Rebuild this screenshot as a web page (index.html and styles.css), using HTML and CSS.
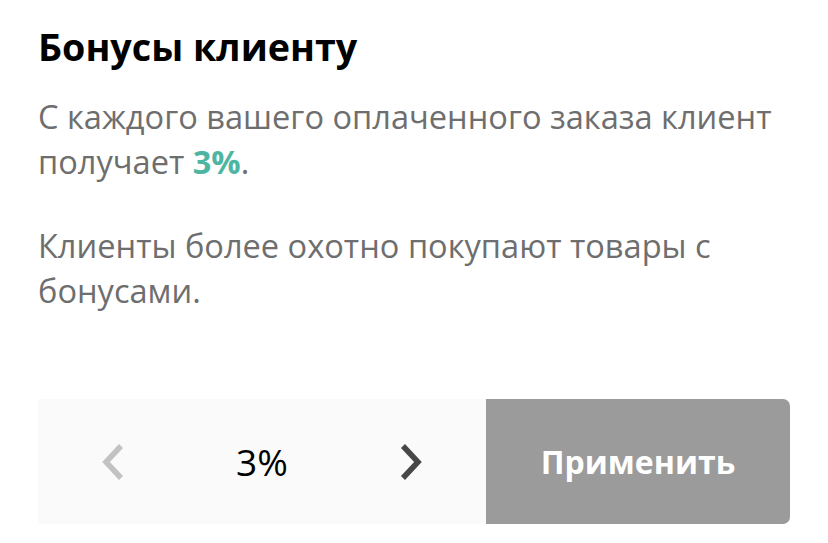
FILE: index.html
```
<!DOCTYPE html>
<html lang="ru">
<head>
<meta charset="utf-8">
<link rel="stylesheet" href="styles.css">
</head>
<body>
<div class="page">
  <h1 class="title">Бонусы клиенту</h1>
  <p class="text">С каждого вашего оплаченного заказа клиент получает <b class="accent">3%</b>.</p>
  <p class="text second">Клиенты более охотно покупают товары с бонусами.</p>
  <div class="bar">
    <div class="stepper">
      <div class="cell">
        <svg class="chev" width="26" height="38" viewBox="0 0 26 38"><polyline points="21,3 6,19 21,35" fill="none" stroke="#c2c2c2" stroke-width="5.5"/></svg>
      </div>
      <div class="cell value">3%</div>
      <div class="cell">
        <svg class="chev" width="26" height="38" viewBox="0 0 26 38"><polyline points="5,3 20,19 5,35" fill="none" stroke="#474747" stroke-width="5.5"/></svg>
      </div>
    </div>
    <div class="apply">Применить</div>
  </div>
</div>
</body>
</html>
```
FILE: styles.css
```
html, body {
  margin: 0;
  padding: 0;
  background: #ffffff;
}
.page {
  padding: 24px 38px 0 38px;
  font-family: "Open Sans", "Noto Sans", sans-serif;
}
.title {
  margin: 0;
  font-size: 37.7px;
  line-height: 46px;
  font-weight: 700;
  color: #000000;
}
.text {
  margin: 24px 0 0 0;
  font-size: 32.6px;
  line-height: 45px;
  color: #6e6e6e;
  width: 752px;
}
.text.second {
  margin-top: 39px;
}
.accent {
  color: #4db6a2;
  font-weight: 700;
}
.bar {
  margin-top: 86px;
  width: 752px;
  height: 125px;
  display: flex;
}
.stepper {
  width: 448px;
  background: #fafafa;
  display: grid;
  grid-template-columns: 1fr 1fr 1fr;
  align-items: center;
}
.cell {
  display: flex;
  justify-content: center;
  align-items: center;
}
.value {
  font-size: 37px;
  color: #000000;
}
.apply {
  flex: 1;
  background: #9b9b9b;
  border-radius: 0 7px 7px 0;
  color: #ffffff;
  font-weight: 700;
  font-size: 32px;
  display: flex;
  justify-content: center;
  align-items: center;
}
```
